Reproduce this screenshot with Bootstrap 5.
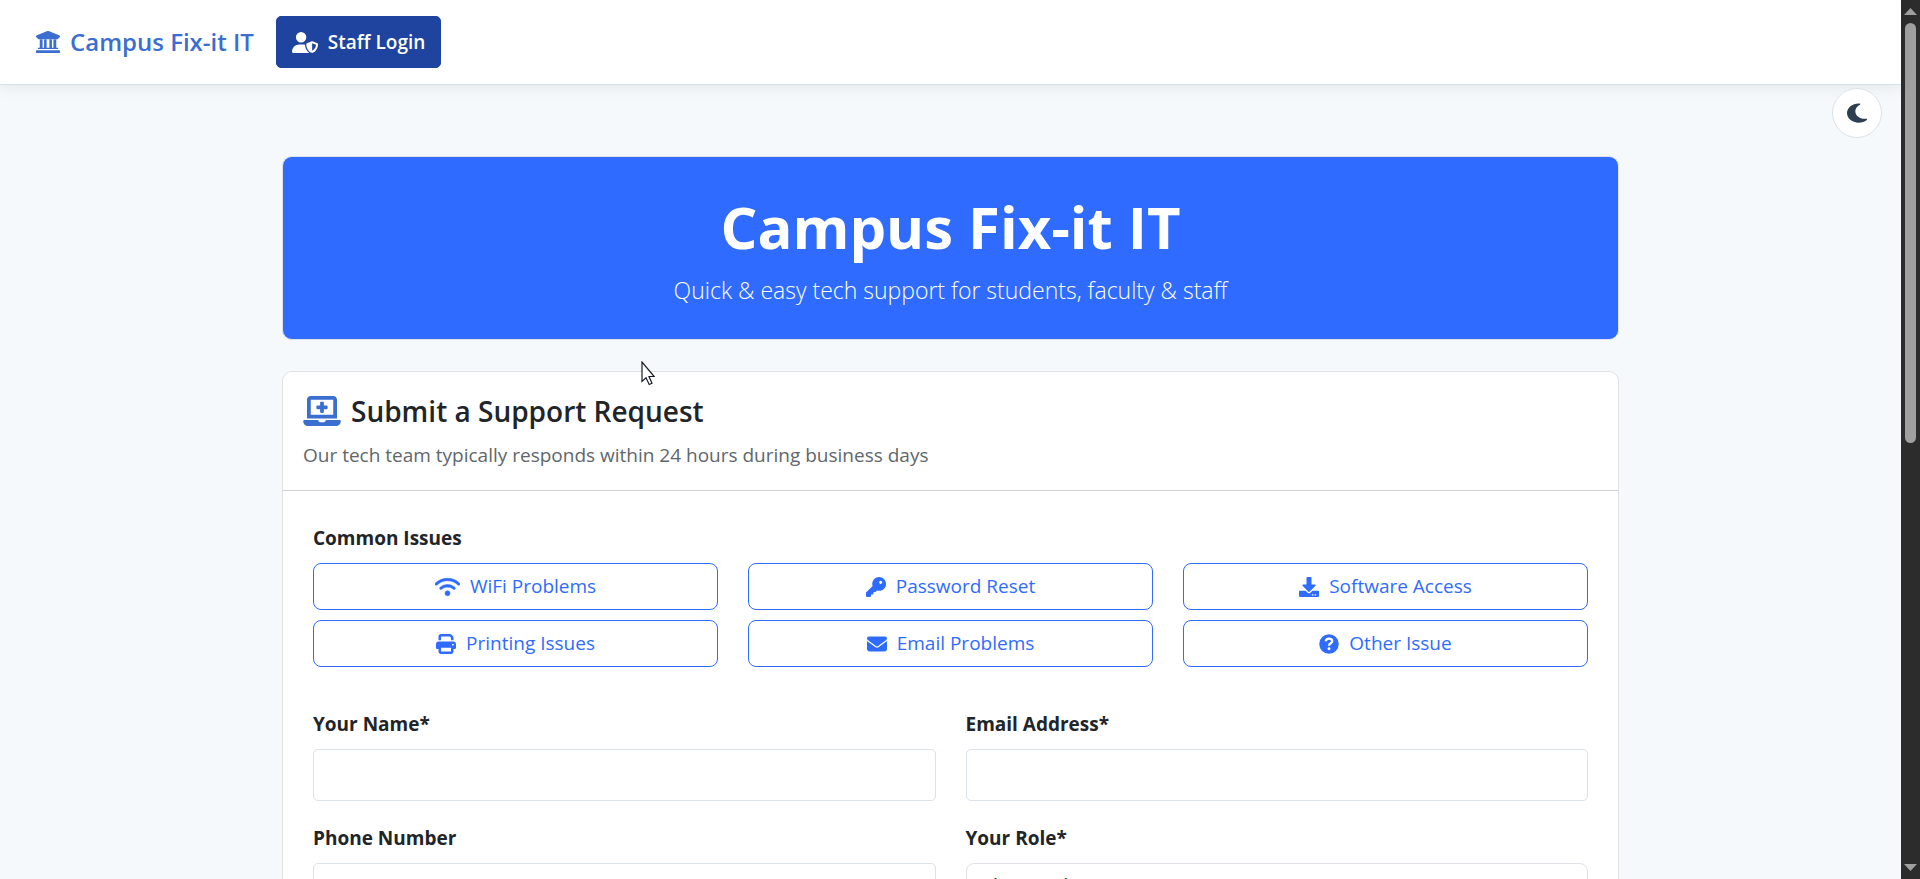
<!DOCTYPE html>
<html lang="en">
<head>
<meta charset="utf-8">
<meta name="viewport" content="width=device-width, initial-scale=1">
<title>Campus Fix-it IT</title>
<link href="https://cdn.jsdelivr.net/npm/bootstrap@5.3.0/dist/css/bootstrap.min.css" rel="stylesheet">
<style>
  :root { --fix-blue: #2f6bff; --fix-brand: #3a6ed0; --fix-navy: #1e44a0; --fix-line: #dbe3ea; }
  body { font-family: "Open Sans", "Segoe UI", sans-serif; font-size: 19px; line-height: 30px; background: #f5f9fc; color: #212529; }
  .page-view { min-width: 0; }
  .site-bar { background: #fff; border-bottom: 1px solid #d6e0e8; box-shadow: 0 2px 15px rgba(0,0,0,.08); padding: 16px 36px; }
  .site-bar .navbar-brand { font-size: 24px; font-weight: 600; color: var(--fix-brand); gap: 10px; margin-right: 22px; padding: 0; }
  .staff-btn { background: var(--fix-navy); color: #fff; font-size: 19px; line-height: 30px; font-weight: 600; border-radius: 5px; padding: 10px 15px; gap: 10px; border: 1px solid var(--fix-navy); }
  .staff-btn:hover { background: #17377f; color: #fff; }
  .theme-btn { position: absolute; top: 88px; right: 19px; width: 50px; height: 50px; background: #fff; border: 1px solid var(--fix-line); color: #2c3e50; z-index: 5; }
  .main-wrap { max-width: 1337px; padding-top: 71px; }
  .hero-panel { background: var(--fix-blue); color: #fff; border: 1px solid #dfe3e8; border-radius: 10px; padding: 40px 30px 30px; margin-bottom: 31px; }
  .hero-panel h1 { font-size: 58px; line-height: 60px; font-weight: 700; margin-bottom: 14px; }
  .hero-panel p { font-size: 23px; line-height: 38px; font-weight: 300; margin: 0; }
  .request-card { border: 1px solid #dee2e6; border-radius: 10px; background: #fff; }
  .request-card .card-header { background: #fff; border-bottom: 1px solid #cfd1d3; border-radius: 10px 10px 0 0; padding: 20px; }
  .request-card h2 { font-size: 28px; line-height: 38px; font-weight: 600; gap: 10px; margin-bottom: 10px; }
  .request-card h2 svg { color: var(--fix-brand); }
  .request-card .card-body { padding: 32px 30px; }
  .head-note { color: #5f666c; }
  .field-label { font-weight: 700; margin-bottom: 10px; display: block; }
  .wide-gap { --bs-gutter-x: 30px; --bs-gutter-y: 10px; }
  .issue-btn { border: 1px solid var(--fix-blue); color: var(--fix-blue); font-size: 19px; border-radius: 8px; height: 47px; padding: 0 10px; gap: 10px; }
  .issue-btn:hover { background: var(--fix-blue); color: #fff; }
  .request-card .form-control { height: 52px; border-color: #dbe2ec; border-radius: 5px; font-size: 19px; }
  .request-card .form-select { height: 47px; border-color: #dee2e6; border-radius: 8px; font-size: 19px; padding: 6px 40px 8px 15px; }
  .form-rows { --bs-gutter-x: 30px; --bs-gutter-y: 22px; margin-top: 20px; }
  .scroll-rail { width: 19px; background: #2c2c2c; color: #a0a0a0; padding: 8px 0; }
  .scroll-thumb { width: 11px; height: 47.8vh; border-radius: 6px; background: #a0a0a0; margin-top: 8px; }
  .pointer { position: absolute; left: 641px; top: 361px; z-index: 9; }
  svg { flex: none; display: block; }
</style>
</head>
<body class="d-flex vh-100 overflow-hidden">
<div class="page-view flex-grow-1 position-relative">
  <nav class="navbar site-bar justify-content-start">
    <a class="navbar-brand d-flex align-items-center" href="#">
      <svg width="24" height="22" viewBox="0 0 512 512" preserveAspectRatio="none" fill="currentColor" aria-hidden="true"><path d="M243.400 2.600l-224 96c-14 6-21.800 21-18.700 35.800S16.800 160 32 160v8c0 13.300 10.700 24 24 24H456c13.300 0 24-10.700 24-24v-8c15.200 0 28.300-10.700 31.300-25.600s-4.800-29.900-18.700-35.800l-224-96c-8-3.400-17.200-3.400-25.200 0zM80 200V390H432V200H372V390H340V200H286V390H226V200H172V390H140V200zM40 390H472V420H40zM24 448H488c14 0 24 10 24 24v40H0V472c0-14 10-24 24-24z"/></svg>
      <span>Campus Fix-it IT</span>
    </a>
    <button type="button" class="btn staff-btn d-flex align-items-center">
      <svg width="26" height="21" viewBox="0 0 640 512" fill="currentColor" aria-hidden="true"><path fill-rule="evenodd" d="M224 256a128 128 0 1 0 0-256 128 128 0 1 0 0 256zm-45.700 48C79.800 304 0 383.800 0 482.300 0 498.700 13.300 512 29.700 512H418.300c1.800 0 3.500-.2 5.300-.5-76.300-55.100-99.800-141-103.100-200.200-16.100-4.800-33.100-7.300-50.700-7.300H178.300zm308.800-78.300l-120 48C358 277.400 352 286.200 352 296c0 63.300 25.900 168.800 134.800 214.200 5.900 2.500 12.600 2.500 18.500 0C614.100 464.800 640 359.300 640 296c0-9.800-6-18.600-15.100-22.300l-120-48c-5.700-2.300-12.100-2.300-17.800 0zM591.400 312c-3.900 50.700-27.200 116.700-95.400 149.700V273.800z"/></svg>
      <span>Staff Login</span>
    </button>
  </nav>
  <button type="button" class="theme-btn rounded-circle d-flex align-items-center justify-content-center p-0" aria-label="Dark mode">
    <svg width="20" height="22" viewBox="0 0 384 512" preserveAspectRatio="none" fill="currentColor" aria-hidden="true"><path d="M223.500 32C100 32 0 132.300 0 256S100 480 223.500 480c60.600 0 115.500-24.200 155.800-63.400 5-4.900 6.300-12.500 3.100-18.700s-10.100-9.700-17-8.500c-9.800 1.700-19.800 2.600-30.100 2.600-96.900 0-175.500-78.800-175.500-176 0-65.800 36-123.100 89.300-153.300 6.100-3.500 9.200-10.500 7.700-17.300s-7.300-11.900-14.300-12.500c-6.300-.5-12.600-.8-19-.8z"/></svg>
  </button>
  <main class="main-wrap mx-auto">
    <header class="hero-panel text-center">
      <h1>Campus Fix-it IT</h1>
      <p>Quick &amp; easy tech support for students, faculty &amp; staff</p>
    </header>
    <section class="card request-card">
      <div class="card-header">
        <h2 class="d-flex align-items-center">
          <svg width="38" height="30" viewBox="0 0 640 512" fill="currentColor" aria-hidden="true"><path fill-rule="evenodd" d="M128 0C92.700 0 64 28.700 64 64V384H576V64c0-35.300-28.700-64-64-64zM128 64H512V320H128zM288 112c0-8.800 7.200-16 16-16h32c8.800 0 16 7.200 16 16v48h48c8.800 0 16 7.200 16 16v32c0 8.800-7.200 16-16 16H352v48c0 8.800-7.200 16-16 16H304c-8.800 0-16-7.200-16-16V224H240c-8.800 0-16-7.200-16-16V176c0-8.800 7.200-16 16-16h48zM19 410C8 410 0 418 0 429 0 475 37 512 83 512H557c46 0 83-37 83-83 0-11-8-19-19-19H384c0 20-14 38-35 38H291c-21 0-35-18-35-38z"/></svg>
          <span>Submit a Support Request</span>
        </h2>
        <p class="head-note mb-0">Our tech team typically responds within 24 hours during business days</p>
      </div>
      <div class="card-body">
        <form>
          <span class="field-label" id="issues">Common Issues</span>
          <div class="row wide-gap" role="group" aria-labelledby="issues">
            <div class="col-4"><button type="button" class="btn issue-btn w-100 d-flex align-items-center justify-content-center">
              <svg width="25" height="20" viewBox="0 0 640 512" fill="currentColor" stroke="currentColor" stroke-width="14" aria-hidden="true"><path d="M54.200 202.900C123.200 136.700 216.800 96 320 96s196.800 40.700 265.800 106.900c12.800 12.200 33 11.800 45.200-.9s11.800-33-.9-45.200C549.700 79.500 440.400 32 320 32S90.300 79.500 9.800 156.700C-2.900 169-3.300 189.200 8.900 202s32.500 13.200 45.200 .9zM320 256c56.800 0 108.600 21.100 148.200 56 13.300 11.700 33.500 10.400 45.200-2.800s10.400-33.500-2.800-45.200C459.800 219.200 393 192 320 192s-139.800 27.200-190.500 72c-13.300 11.700-14.500 31.900-2.800 45.200s31.900 14.500 45.200 2.800c39.500-34.900 91.300-56 148.200-56zm64 160a64 64 0 1 0-128 0 64 64 0 1 0 128 0z"/></svg><span>WiFi Problems</span></button></div>
            <div class="col-4"><button type="button" class="btn issue-btn w-100 d-flex align-items-center justify-content-center">
              <svg width="20" height="20" viewBox="0 0 512 512" fill="currentColor" aria-hidden="true"><path d="M336 352c97.200 0 176-78.800 176-176S433.200 0 336 0 160 78.800 160 176c0 18.700 2.900 36.800 8.300 53.700L7 391c-4.500 4.500-7 10.600-7 17v80c0 13.300 10.700 24 24 24h80c13.300 0 24-10.700 24-24V448h40c13.300 0 24-10.700 24-24V384h40c6.400 0 12.500-2.500 17-7l33.300-33.300c16.900 5.400 35 8.300 53.700 8.300zM376 96a40 40 0 1 1 0 80 40 40 0 1 1 0-80z"/></svg><span>Password Reset</span></button></div>
            <div class="col-4"><button type="button" class="btn issue-btn w-100 d-flex align-items-center justify-content-center">
              <svg width="20" height="20" viewBox="0 0 512 512" fill="currentColor" aria-hidden="true"><path fill-rule="evenodd" d="M216 0h80c13.300 0 24 10.700 24 24v168h87.700c17.800 0 26.700 21.500 14.100 34.100L269.700 378.300c-7.500 7.500-19.800 7.500-27.300 0L90.100 226.100c-12.600-12.600-3.700-34.100 14.100-34.100H192V24c0-13.300 10.700-24 24-24zM512 376V488c0 13.300-10.700 24-24 24H24c-13.300 0-24-10.700-24-24V376c0-13.300 10.700-24 24-24h146.700l49 49c20.100 20.100 52.500 20.100 72.600 0l49-49H488c13.300 0 24 10.700 24 24zM368 444h-40v32h40zM440 444h-40v32h40z"/></svg><span>Software Access</span></button></div>
            <div class="col-4"><button type="button" class="btn issue-btn w-100 d-flex align-items-center justify-content-center">
              <svg width="20" height="20" viewBox="0 0 512 512" fill="currentColor" aria-hidden="true"><path fill-rule="evenodd" d="M128 0C92.700 0 64 28.700 64 64v96h64V64H354.700L384 93.300V160h64V93.300c0-17-6.700-33.300-18.700-45.300L400 18.700C388 6.700 371.700 0 354.700 0zM384 352v96H128V352zm64 32h32c17.700 0 32-14.300 32-32V256c0-35.300-28.700-64-64-64H64c-35.300 0-64 28.700-64 64v96c0 17.700 14.300 32 32 32H64v64c0 35.300 28.700 64 64 64H384c35.300 0 64-28.700 64-64zM432 248a24 24 0 1 1 0 48 24 24 0 1 1 0-48z"/></svg><span>Printing Issues</span></button></div>
            <div class="col-4"><button type="button" class="btn issue-btn w-100 d-flex align-items-center justify-content-center">
              <svg width="20" height="20" viewBox="0 0 512 512" fill="currentColor" aria-hidden="true"><path d="M48 64C21.500 64 0 85.500 0 112c0 15.100 7.100 29.300 19.200 38.400L236.800 313.600c11.400 8.500 27 8.500 38.400 0L492.800 150.400c12.100-9.100 19.200-23.300 19.200-38.400 0-26.500-21.500-48-48-48zM0 176V384c0 35.300 28.700 64 64 64H448c35.300 0 64-28.700 64-64V176L294.400 339.200c-22.800 17.100-54 17.100-76.800 0z"/></svg><span>Email Problems</span></button></div>
            <div class="col-4"><button type="button" class="btn issue-btn w-100 d-flex align-items-center justify-content-center">
              <svg width="20" height="20" viewBox="0 0 512 512" fill="none" aria-hidden="true"><circle cx="256" cy="256" r="250" fill="currentColor"/><path d="M176 188c0-45 30-68 80-68 48 0 84 24 84 68 0 52-84 50-84 110" stroke="#fff" stroke-width="58"/><circle cx="256" cy="376" r="38" fill="#fff"/></svg><span>Other Issue</span></button></div>
          </div>
          <div class="row form-rows">
            <div class="col-6"><label class="field-label" for="name">Your Name*</label><input class="form-control" type="text" id="name" required></div>
            <div class="col-6"><label class="field-label" for="email">Email Address*</label><input class="form-control" type="email" id="email" required></div>
            <div class="col-6"><label class="field-label" for="phone">Phone Number</label><input class="form-control" type="tel" id="phone"></div>
            <div class="col-6"><label class="field-label" for="role">Your Role*</label><select class="form-select" id="role" required><option>Please select</option></select></div>
          </div>
        </form>
      </div>
    </section>
  </main>
  <svg class="pointer" width="14" height="25" viewBox="0 0 14 25" aria-hidden="true"><path d="M1 1V20.500L5 16.800 8.200 23.500 11 22.200 8 15.500H13.200z" fill="#fff" stroke="#1a1a2a" stroke-width="1.200"/></svg>
</div>
<div class="scroll-rail flex-shrink-0 d-flex flex-column align-items-center" aria-hidden="true">
  <svg width="13" height="7" viewBox="0 0 13 7" fill="currentColor"><path d="M6.500 0L13 7H0z"/></svg>
  <div class="scroll-thumb"></div>
  <svg class="mt-auto" width="13" height="7" viewBox="0 0 13 7" fill="currentColor"><path d="M0 0H13L6.500 7z"/></svg>
</div>
<script src="https://cdn.jsdelivr.net/npm/bootstrap@5.3.0/dist/js/bootstrap.bundle.min.js"></script>
</body>
</html>
